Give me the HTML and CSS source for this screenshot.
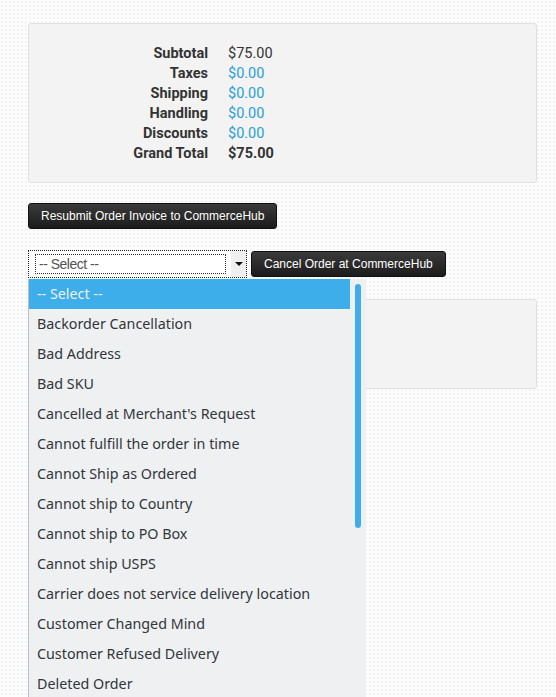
FILE: index.html
```html
<!DOCTYPE html>
<html>
<head>
<meta charset="utf-8">
<link rel="stylesheet" href="styles.css">
</head>
<body>
<div class="page">
  <div class="panel totals">
    <div class="grid">
      <span class="lbl">Subtotal</span><span class="val">$75.00</span>
      <span class="lbl">Taxes</span><span class="val blue">$0.00</span>
      <span class="lbl">Shipping</span><span class="val blue">$0.00</span>
      <span class="lbl">Handling</span><span class="val blue">$0.00</span>
      <span class="lbl">Discounts</span><span class="val blue">$0.00</span>
      <span class="lbl">Grand Total</span><span class="val strong">$75.00</span>
    </div>
  </div>

  <div class="row-btn">
    <button class="btn">Resubmit Order Invoice to CommerceHub</button>
  </div>

  <div class="row-select">
    <div class="select-wrap">
      <div class="fake-select">
        <div class="sel-text"><span>-- Select --</span></div>
        <div class="sel-arrow"><svg width="8" height="4" viewBox="0 0 8 4"><path d="M0 0H8L4 4Z" fill="#111"/></svg></div>
      </div>
      <div class="dropdown">
        <ul class="opts">
          <li class="active">-- Select --</li>
          <li>Backorder Cancellation</li>
          <li>Bad Address</li>
          <li>Bad SKU</li>
          <li>Cancelled at Merchant's Request</li>
          <li>Cannot fulfill the order in time</li>
          <li>Cannot Ship as Ordered</li>
          <li>Cannot ship to Country</li>
          <li>Cannot ship to PO Box</li>
          <li>Cannot ship USPS</li>
          <li>Carrier does not service delivery location</li>
          <li>Customer Changed Mind</li>
          <li>Customer Refused Delivery</li>
          <li>Deleted Order</li>
        </ul>
        <div class="scroll"><div class="thumb"></div></div>
      </div>
    </div>
    <button class="btn btn2">Cancel Order at CommerceHub</button>
  </div>

  <div class="panel second"></div>
</div>
</body>
</html>
```

FILE: styles.css
```css
html, body {
  margin: 0;
  padding: 0;
  overflow: hidden;
}
body {
  background-color: #fdfdfd;
  background-image: radial-gradient(circle, #f2f2f2 0.8px, transparent 1.2px);
  background-size: 4px 4px;
  height: 697px;
}
.page {
  width: 509px;
  margin: 23px 0 0 28px;
}
.panel {
  background: #f3f3f3;
  border: 1px solid #e0e0e0;
  border-radius: 3px;
  box-sizing: border-box;
}
.totals {
  height: 160px;
  padding-top: 20px;
}
.grid {
  display: grid;
  grid-template-columns: 179px auto;
  column-gap: 20px;
  font-family: Roboto, "Liberation Sans", sans-serif;
  font-size: 14.5px;
  line-height: 20px;
  color: #333;
}
.lbl {
  text-align: right;
  font-weight: bold;
}
.val { color: #333; }
.val.blue { color: #2a9fd6; }
.val.strong { font-weight: bold; }

.row-btn {
  margin-top: 20px;
}
.btn {
  display: block;
  height: 26px;
  padding: 0 12px;
  border: 1px solid #111;
  border-radius: 3px;
  background: linear-gradient(#3a3a3a, #1c1c1c);
  color: #fff;
  font-family: "Liberation Sans", Arial, sans-serif;
  font-size: 12px;
  line-height: 24px;
  box-sizing: border-box;
  white-space: nowrap;
}
.row-select {
  margin-top: 21px;
  display: flex;
  align-items: flex-start;
  gap: 4px;
}
.select-wrap {
  position: relative;
}
.fake-select {
  width: 219px;
  height: 28px;
  box-sizing: border-box;
  border: 1px dotted #222;
  display: flex;
  background: #fff;
}
.sel-text {
  flex: 1;
  padding: 3px 5px 2px 6px;
  box-sizing: border-box;
}
.sel-text span {
  display: block;
  height: 20px;
  border: 1px dotted #333;
  font-family: "Liberation Sans", Arial, sans-serif;
  font-size: 14px;
  letter-spacing: -0.5px;
  line-height: 18px;
  color: #555;
  padding-left: 3px;
  box-sizing: border-box;
}
.sel-arrow {
  width: 15px;
  background: #efefef;
  display: flex;
  align-items: center;
  justify-content: center;
}
.btn2 {
  margin-top: 1px;
  padding: 0 12px;
}
.dropdown {
  position: absolute;
  left: 0;
  top: 29px;
  width: 338px;
  height: 440px;
  background: #eff0f1;
  border-left: 1px solid #bcbebf;
  box-sizing: border-box;
  display: flex;
  z-index: 5;
}
.opts {
  list-style: none;
  margin: 0;
  padding: 0;
  flex: 1;
  font-family: "Noto Sans", "Open Sans", sans-serif;
  font-size: 14.3px;
  color: #31363b;
}
.opts li {
  height: 30px;
  line-height: 30px;
  padding-left: 8px;
  white-space: nowrap;
}
.opts li.active {
  background: #3daee9;
  color: #eff0f1;
}
.scroll {
  width: 16px;
  position: relative;
}
.thumb {
  position: absolute;
  left: 5px;
  top: 5px;
  width: 6px;
  height: 244px;
  border-radius: 3px;
  background: #3daee9;
}
.second {
  margin-top: 21px;
  height: 90px;
}
```
